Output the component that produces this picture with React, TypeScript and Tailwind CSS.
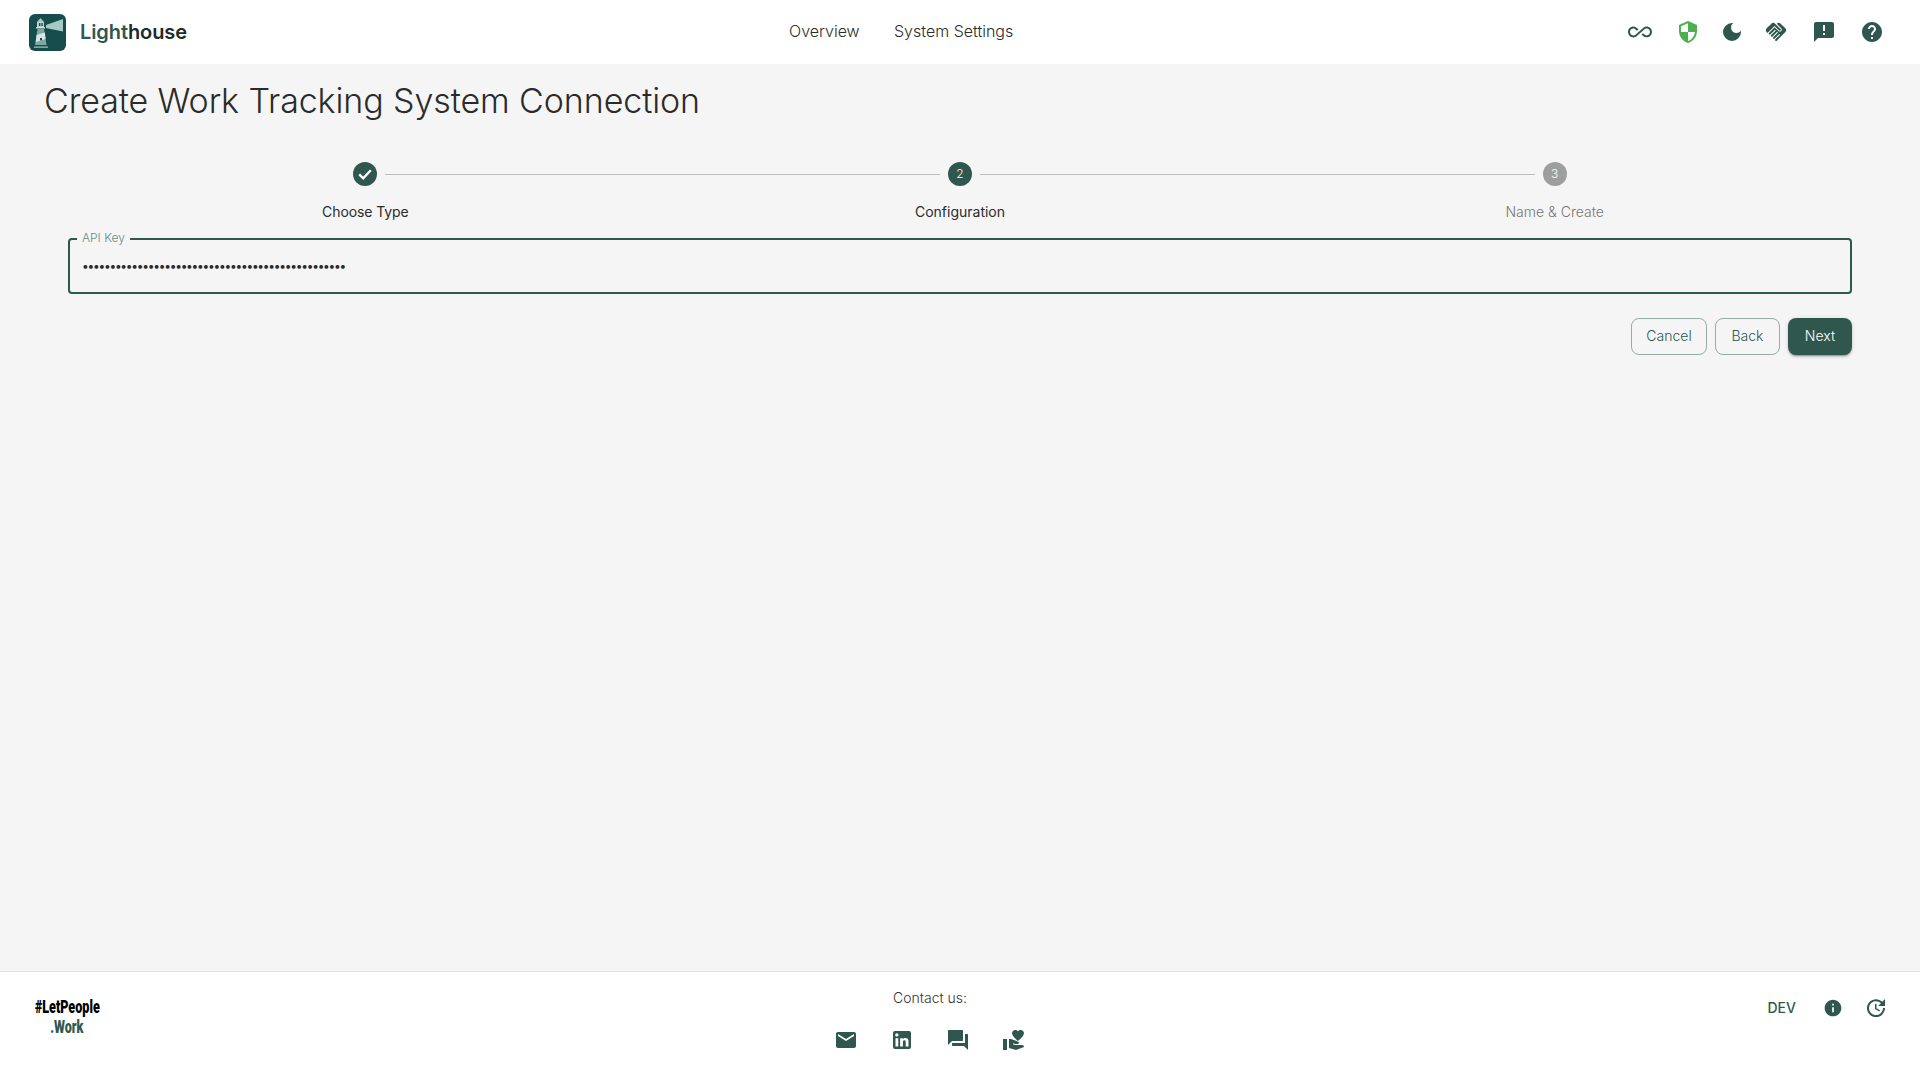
import { MdAllInclusive, MdDarkMode, MdHandshake, MdAnnouncement, MdHelp, MdEmail, MdForum, MdVolunteerActivism, MdInfo, MdUpdate } from "react-icons/md";

const F = "font-['Inter',sans-serif]";

function Logo() {
  return (
    <svg width="37" height="37" viewBox="0 0 37 37" className="block">
      <rect width="37" height="37" rx="6" fill="#174c4c" />
      <path d="M17 11 L34 5 V17.5 L17 14 Z" fill="#a5c9c3" />
      <path d="M8 8 L11.5 4 L15 8 Z" fill="#a5c9c3" />
      <rect x="8" y="8" width="7" height="5" fill="#b9d4cf" />
      <rect x="10" y="9" width="1.4" height="3" fill="#174c4c" />
      <rect x="12.4" y="9" width="1.4" height="3" fill="#174c4c" />
      <rect x="7" y="13" width="9" height="1.5" fill="#cfe0dc" />
      <path d="M8.5 15 H15 L17.5 31 H6 Z" fill="#7fa8a1" />
      <path d="M7.6 21 L15.8 18.5 L16.6 25 L6.8 28 Z" fill="#d8e7e4" />
      <rect x="11" y="24" width="2" height="2.4" fill="#174c4c" />
      <rect x="5" y="32.5" width="14" height="1.2" fill="#a5c9c3" />
    </svg>
  );
}

function Shield() {
  return (
    <svg width="24" height="24" viewBox="0 0 24 24" fill="#4caf50">
      <path d="M12 1 3 5v6c0 5.55 3.84 10.74 9 12 5.16-1.26 9-6.45 9-12V5l-9-4zm0 10.99h7c-.53 4.12-3.28 7.79-7 8.94V12H5V6.3l7-3.11v8.8z" />
    </svg>
  );
}

function LinkedIn() {
  return (
    <svg width="24" height="24" viewBox="0 0 24 24" fill="#30574e">
      <path d="M19 3a2 2 0 0 1 2 2v14a2 2 0 0 1-2 2H5a2 2 0 0 1-2-2V5a2 2 0 0 1 2-2h14m-.5 15.5v-5.3a3.26 3.26 0 0 0-3.26-3.26c-.85 0-1.84.52-2.32 1.3v-1.11h-2.79v8.37h2.79v-4.93c0-.77.62-1.4 1.39-1.4a1.4 1.4 0 0 1 1.4 1.4v4.93h2.79M6.88 8.56a1.68 1.68 0 0 0 1.68-1.68c0-.93-.75-1.69-1.68-1.69a1.69 1.69 0 0 0-1.69 1.69c0 .93.76 1.68 1.69 1.68m1.39 9.94v-8.37H5.5v8.37h2.77z" />
    </svg>
  );
}

function Check() {
  return (
    <svg width="24" height="24" viewBox="0 0 24 24" fill="none" stroke="#ffffff" strokeWidth="2.3">
      <path d="M6.2 12.4 10.2 16.3 17.8 8.3" />
    </svg>
  );
}

function Step({ left, right, circle, label }: { left: boolean; right: boolean; circle: React.ReactNode; label: React.ReactNode }) {
  return (
    <div className="flex flex-col items-center">
      <div className="flex w-full items-center">
        <div className="flex-1 pr-2">{left && <div className="h-px bg-[#bdbdbd]" />}</div>
        {circle}
        <div className="flex-1 pl-2">{right && <div className="h-px bg-[#bdbdbd]" />}</div>
      </div>
      <div className="mt-[15px] h-[20px] leading-[20px]">{label}</div>
    </div>
  );
}

export default function App() {
  return (
    <div className={`flex h-[1080px] w-[1920px] flex-col overflow-hidden bg-[#f5f5f5] text-[#2b2b2b] ${F}`}>
      <header className="flex h-[64px] shrink-0 items-center bg-white">
        <div className="flex w-[789px] shrink-0 items-center pl-[29px]">
          <Logo />
          <span className="ml-[14px] -mt-[1px] text-[20px] font-semibold tracking-[-0.1px]">
            <span className="text-[#30574e]">Light</span>
            <span className="text-[#1e2a2a]">house</span>
          </span>
        </div>
        <nav className="-mt-[3px] flex items-center gap-[35px] whitespace-nowrap text-[16px] font-light text-[#2b2b2b]">
          <span className="w-[70px]">Overview</span>
          <span className="w-[119px]">System Settings</span>
        </nav>
        <div className="ml-auto flex items-center pr-[24px] text-[#30574e]">
          <span className="flex w-[48px] justify-center"><MdAllInclusive size={24} /></span>
          <span className="flex w-[48px] justify-center"><Shield /></span>
          <span className="flex w-[40px] justify-center"><MdDarkMode size={24} /></span>
          <span className="flex w-[48px] justify-center"><MdHandshake size={24} /></span>
          <span className="flex w-[48px] justify-center"><MdAnnouncement size={24} /></span>
          <span className="flex w-[48px] justify-center"><MdHelp size={24} /></span>
        </div>
      </header>

      <main className="flex-1 px-[68px]">
        <h1 className="-ml-[24px] mt-[16px] h-[42px] whitespace-nowrap text-[34px] font-light leading-[42px] tracking-[-0.1px] text-[#2b2b2b]">
          Create Work Tracking System Connection
        </h1>
        <div className="mt-[40px] grid grid-cols-3">
          <Step
            left={false}
            right
            circle={
              <span className="flex h-6 w-6 items-center justify-center rounded-full bg-[#30574e]">
                <Check />
              </span>
            }
            label={<span className="text-[14px] font-normal tracking-[-0.1px] text-[#2b2b2b]">Choose Type</span>}
          />
          <Step
            left
            right
            circle={
              <span className="flex h-6 w-6 items-center justify-center rounded-full bg-[#30574e] text-[12px] font-light text-white">2</span>
            }
            label={<span className="text-[14px] font-normal text-[#2b2b2b]">Configuration</span>}
          />
          <Step
            left
            right={false}
            circle={
              <span className="flex h-6 w-6 items-center justify-center rounded-full bg-[#9e9e9e] text-[12px] font-light text-white">3</span>
            }
            label={<span className="text-[14px] font-light text-[#757575]">Name &amp; Create</span>}
          />
        </div>
        <fieldset className="mt-[12px] h-[61px] rounded-[4px] border-2 border-[#30574e] px-[7px]">
          <legend className="ml-0 -translate-y-[1px] px-[5px] text-[12px] font-light leading-[12px] text-[#6b8a83]">API Key</legend>
          <input
            readOnly
            type="password"
            value="012345678901234567890123456789012345678901234567"
            className="h-[40px] w-full bg-transparent pl-[5px] text-[12px] tracking-[-1.27px] text-[#2b2b2b] outline-none"
          />
        </fieldset>
        <div className="mt-[24px] flex justify-end gap-[8px] text-[14px] font-light">
          <button className="h-[37px] w-[76px] rounded-[8px] border border-[#98aba6] pb-[2px] text-[#30574e]">Cancel</button>
          <button className="h-[37px] w-[65px] rounded-[8px] border border-[#98aba6] pb-[2px] text-[#30574e]">Back</button>
          <button className="h-[37px] w-[64px] rounded-[8px] bg-[#30574e] pb-[2px] text-white shadow-[0_3px_1px_-2px_rgba(0,0,0,0.2),0_2px_2px_0_rgba(0,0,0,0.14),0_1px_5px_0_rgba(0,0,0,0.12)]">Next</button>
        </div>
      </main>

      <footer className="flex h-[109px] shrink-0 border-t border-[#e0e0e0] bg-white">
        <div className="w-[790px] shrink-0 pl-[34px] pt-[25px]">
          <div className="flex w-[66px] flex-col items-center font-['Roboto',sans-serif] text-[18px] font-black leading-[20px]">
            <div className="shrink-0 scale-x-[0.7] whitespace-nowrap text-black">#LetPeople</div>
            <div className="shrink-0 scale-x-[0.7] text-[#30574e]">.Work</div>
          </div>
        </div>
        <div className="w-[280px] shrink-0 pt-[16px] text-center">
          <div className="text-[14px] font-light leading-[20px] text-[#333]">Contact us:</div>
          <div className="mt-[20px] flex justify-center gap-[32px] text-[#30574e]">
            <MdEmail size={24} />
            <LinkedIn />
            <MdForum size={24} />
            <MdVolunteerActivism size={24} />
          </div>
        </div>
        <div className="flex flex-1 items-start justify-end pr-[32px] pt-[24px] text-[#30574e]">
          <span className="mr-[27px] h-[24px] text-[14px] font-medium leading-[24px]">DEV</span>
          <span className="mr-[21px] flex h-[24px] items-center"><MdInfo size={20} /></span>
          <MdUpdate size={24} />
        </div>
      </footer>
    </div>
  );
}
